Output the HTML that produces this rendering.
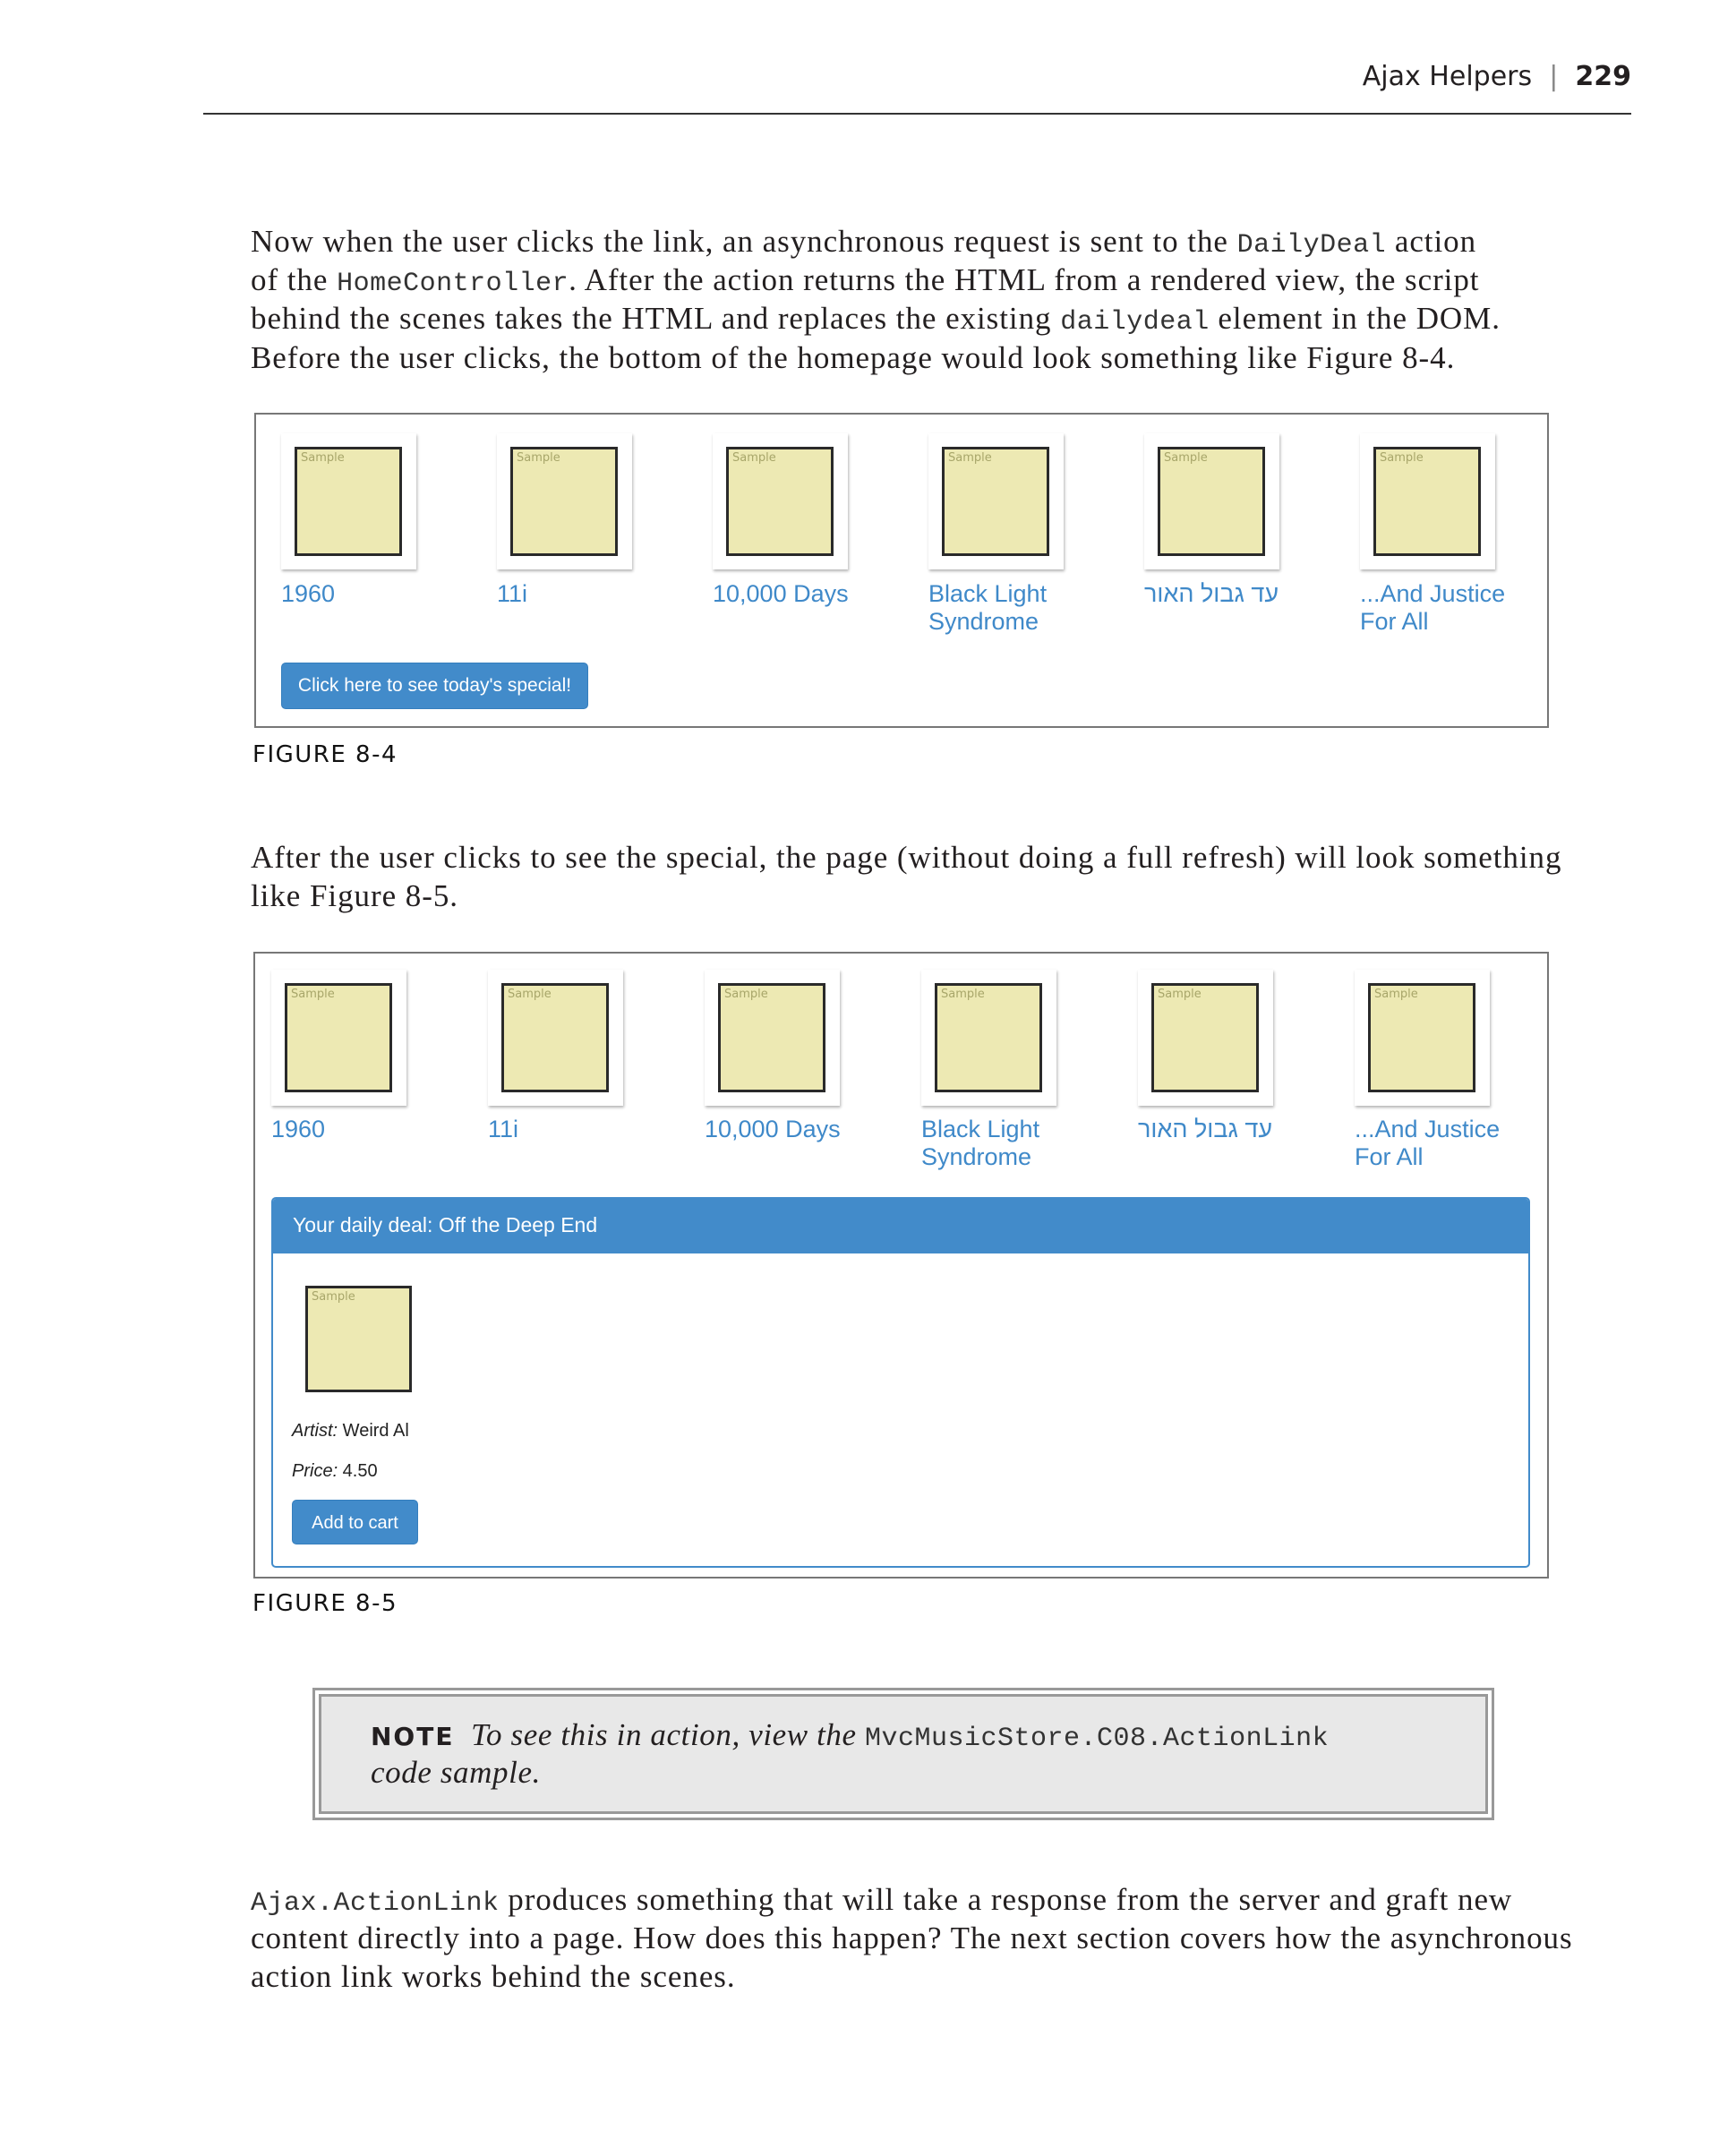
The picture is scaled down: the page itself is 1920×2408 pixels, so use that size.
<!DOCTYPE html>
<html><head><meta charset="utf-8"><style>
*{margin:0;padding:0;box-sizing:border-box}
body{width:1920px;height:2408px;background:#fff;position:relative;font-family:"Liberation Serif",serif;color:#231f20;overflow:hidden}
.a{position:absolute;white-space:nowrap}
.p{font-size:35px;letter-spacing:0.95px}
code{font-family:"Liberation Mono",monospace;font-size:30px;letter-spacing:0.5px;color:#333}
.hdr{font-family:"DejaVu Sans",sans-serif;font-size:30px;right:98px;top:68px}
.fig{font-family:"DejaVu Sans",sans-serif;font-size:26px;left:282px;letter-spacing:1.5px;color:#111}
.frame{position:absolute;border:2px solid #777;background:#fff}
.th{position:absolute;width:151px;height:152px;background:#fff;box-shadow:1px 2px 3px rgba(0,0,0,.3)}
.img{position:absolute;width:120px;height:122px;background:#ede9b3;border:3px solid #2a2a2a;font-family:"DejaVu Sans",sans-serif;font-size:13px;color:#a8a66a;padding:2px 4px}
.th .img{left:15px;top:15px}
.t{position:absolute;font-family:"Liberation Sans",sans-serif;font-size:27px;color:#3f89c9;line-height:31px;white-space:nowrap}
.btn{position:absolute;background:#428bca;color:#fff;border-radius:5px;font-family:"Liberation Sans",sans-serif;font-size:21px;line-height:50px;text-align:center;border:1px solid #357ebd}
.s{font-family:"Liberation Sans",sans-serif;font-size:20px;color:#222}
</style></head><body>
<div class="a hdr">Ajax Helpers &nbsp;<span style="color:#888">|</span>&nbsp; <b>229</b></div>
<div style="position:absolute;left:227px;top:126px;width:1595px;height:2px;background:#333"></div>

<div class="a p" style="left:280px;top:250px">Now when the user clicks the link, an asynchronous request is sent to the <code>DailyDeal</code> action</div>
<div class="a p" style="left:280px;top:293px">of the <code>HomeController</code>. After the action returns the HTML from a rendered view, the script</div>
<div class="a p" style="left:280px;top:336px">behind the scenes takes the HTML and replaces the existing <code>dailydeal</code> element in the DOM.</div>
<div class="a p" style="left:280px;top:380px">Before the user clicks, the bottom of the homepage would look something like Figure 8-4.</div>

<div class="frame" style="left:284px;top:461px;width:1446px;height:352px"></div>
<div class="th" style="left:314px;top:484px"><div class="img">Sample</div></div>
<div class="th" style="left:555px;top:484px"><div class="img">Sample</div></div>
<div class="th" style="left:796px;top:484px"><div class="img">Sample</div></div>
<div class="th" style="left:1037px;top:484px"><div class="img">Sample</div></div>
<div class="th" style="left:1278px;top:484px"><div class="img">Sample</div></div>
<div class="th" style="left:1519px;top:484px"><div class="img">Sample</div></div>
<div class="t" style="left:314px;top:648px">1960</div>
<div class="t" style="left:555px;top:648px">11i</div>
<div class="t" style="left:796px;top:648px">10,000 Days</div>
<div class="t" style="left:1037px;top:648px">Black Light<br>Syndrome</div>
<div class="t" style="left:1278px;top:648px" dir="rtl">עד גבול האור</div>
<div class="t" style="left:1519px;top:648px">...And Justice<br>For All</div>
<div class="btn" style="left:314px;top:740px;width:343px;height:52px">Click here to see today's special!</div>

<div class="a fig" style="top:828px">FIGURE 8-4</div>

<div class="a p" style="left:280px;top:938px">After the user clicks to see the special, the page (without doing a full refresh) will look something</div>
<div class="a p" style="left:280px;top:981px">like Figure 8-5.</div>

<div class="frame" style="left:283px;top:1063px;width:1447px;height:700px"></div>
<div class="th" style="left:303px;top:1083px"><div class="img">Sample</div></div>
<div class="th" style="left:545px;top:1083px"><div class="img">Sample</div></div>
<div class="th" style="left:787px;top:1083px"><div class="img">Sample</div></div>
<div class="th" style="left:1029px;top:1083px"><div class="img">Sample</div></div>
<div class="th" style="left:1271px;top:1083px"><div class="img">Sample</div></div>
<div class="th" style="left:1513px;top:1083px"><div class="img">Sample</div></div>
<div class="t" style="left:303px;top:1246px">1960</div>
<div class="t" style="left:545px;top:1246px">11i</div>
<div class="t" style="left:787px;top:1246px">10,000 Days</div>
<div class="t" style="left:1029px;top:1246px">Black Light<br>Syndrome</div>
<div class="t" style="left:1271px;top:1246px" dir="rtl">עד גבול האור</div>
<div class="t" style="left:1513px;top:1246px">...And Justice<br>For All</div>

<div style="position:absolute;left:303px;top:1337px;width:1406px;height:414px;border:2px solid #428bca;border-radius:5px;overflow:hidden">
<div style="height:61px;background:#428bca;color:#fff;font-family:'Liberation Sans',sans-serif;font-size:23px;line-height:58px;padding-left:22px">Your daily deal: Off the Deep End</div>
</div>
<div class="img" style="left:341px;top:1436px;width:119px;height:119px">Sample</div>
<div class="a s" style="left:326px;top:1587px"><i>Artist:</i> Weird Al</div>
<div class="a s" style="left:326px;top:1632px"><i>Price:</i> 4.50</div>
<div class="btn" style="left:326px;top:1675px;width:141px;height:50px;font-size:20px">Add to cart</div>

<div class="a fig" style="top:1776px">FIGURE 8-5</div>

<div style="position:absolute;left:349px;top:1885px;width:1320px;height:148px;border:3px solid #999;background:#fff;padding:4px">
<div style="width:100%;height:100%;border:3px solid #999;background:#e8e8e8"></div></div>
<div class="a" style="left:414px;top:1918px;font-size:35px;letter-spacing:0.6px"><span style="font-family:'DejaVu Sans',sans-serif;font-weight:bold;font-size:28px;letter-spacing:2px">NOTE</span>&nbsp; <i>To see this in action, view the</i> <code>MvcMusicStore.C08.ActionLink</code></div>
<div class="a" style="left:414px;top:1960px;font-size:35px;letter-spacing:0.6px"><i>code sample.</i></div>

<div class="a p" style="left:280px;top:2102px"><code>Ajax.ActionLink</code> produces something that will take a response from the server and graft new</div>
<div class="a p" style="left:280px;top:2145px">content directly into a page. How does this happen? The next section covers how the asynchronous</div>
<div class="a p" style="left:280px;top:2188px">action link works behind the scenes.</div>
</body></html>
